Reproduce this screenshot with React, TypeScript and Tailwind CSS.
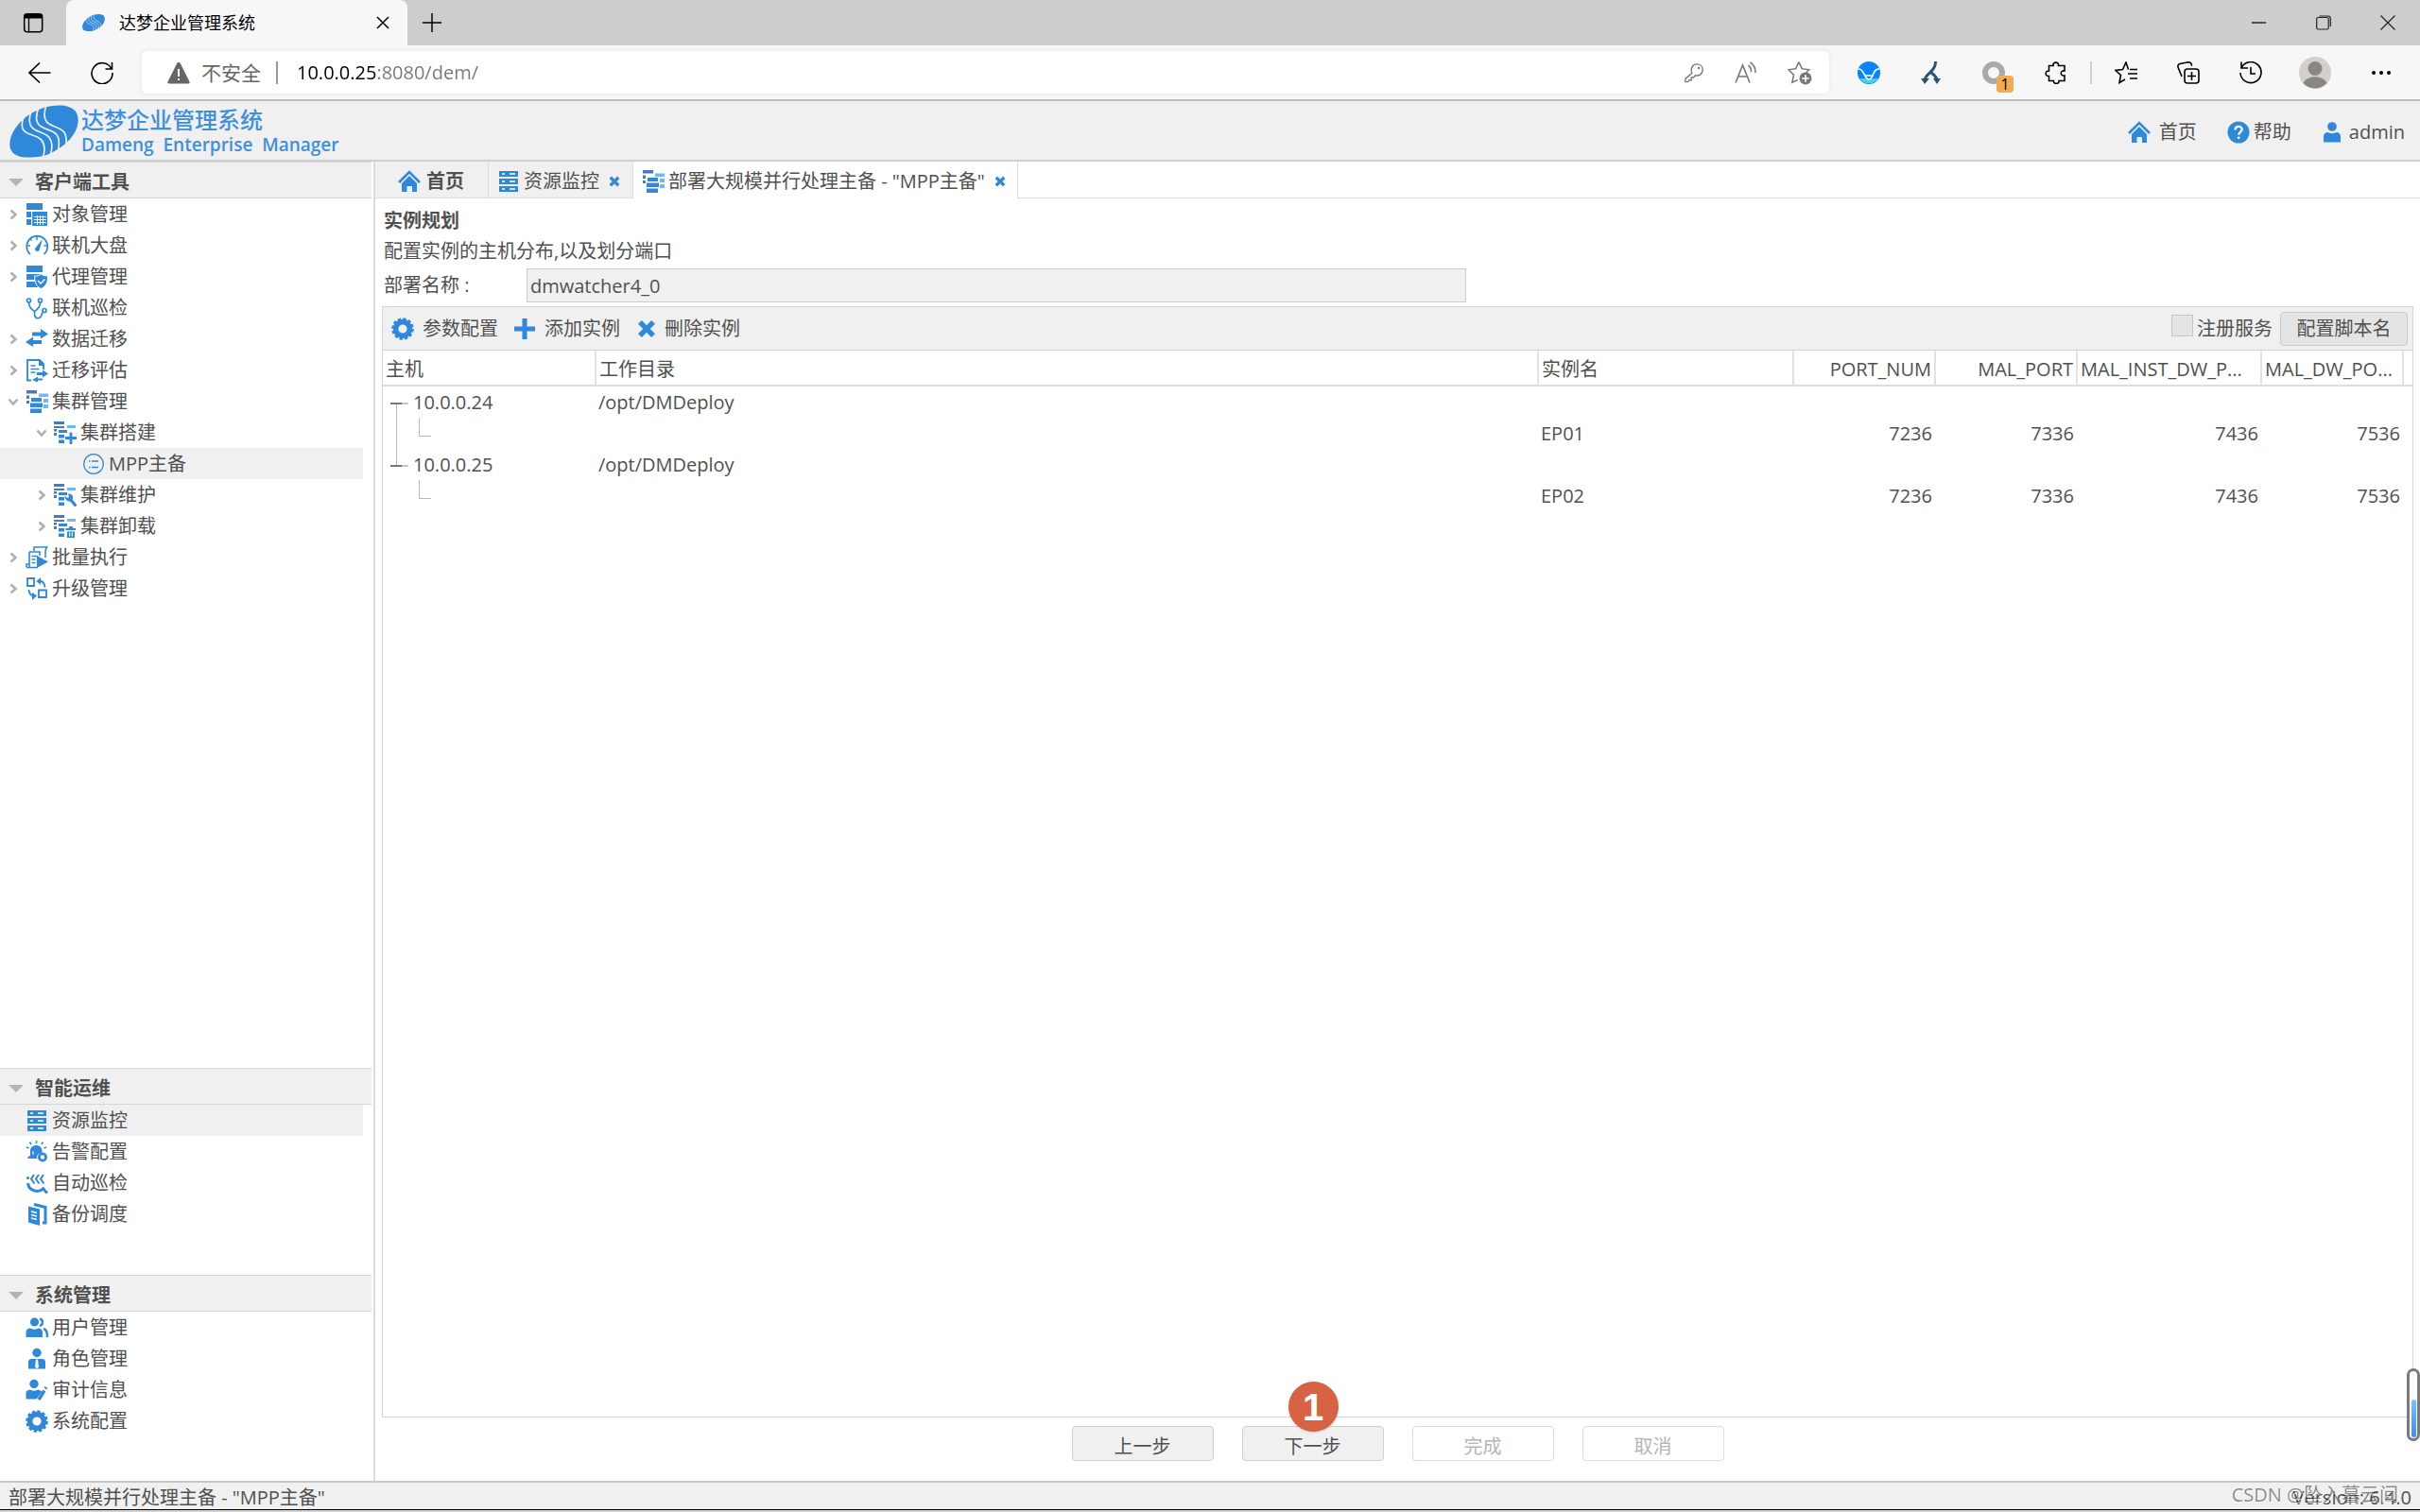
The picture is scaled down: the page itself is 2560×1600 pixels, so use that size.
import type { ReactNode } from "react";
import { clsx } from "clsx";

const BLUE = "#2f88d9";
const DARK = "#4a78b8";
const LIGHT = "#6db7fb";

type IconProps = { className?: string };

function Svg({ children, className = "size-6", box = "0 0 24 24" }: { children: ReactNode; className?: string; box?: string }) {
  return (
    <svg viewBox={box} className={clsx("shrink-0", className)} fill="none" aria-hidden="true">
      {children}
    </svg>
  );
}

/* ---------- logo ---------- */

function Logo({ className, line = "#f0f0f0" }: IconProps & { line?: string }) {
  return (
    <Svg box="30 334 220 168" className={className}>
      <path
        fill={BLUE}
        d="M31 462C30 432 48 402 78 376C112 348 152 335 192 335C228 336 249 352 249 382C248 412 232 438 205 460C178 482 150 494 132 498C108 502 84 502 66 499C44 494 32 482 31 462Z"
      />
      <g stroke={line} strokeWidth="5">
        <path d="M147 334C141 358 138 376 150 389C165 404 190 404 204 420C212 431 213 445 210 464" />
        <path d="M124 340C115 362 112 385 125 398C142 413 168 413 181 429C190 441 190 458 184 484" />
        <path d="M100 352C92 374 90 395 104 408C120 422 144 422 157 438C166 450 168 470 160 494" />
        <path d="M76 370C68 390 66 408 80 419C98 433 120 430 133 447C143 460 144 480 136 504" />
      </g>
    </Svg>
  );
}

/* ---------- application icons ---------- */

function HomeIcon({ className }: IconProps) {
  return (
    <Svg className={className}>
      <path fill={BLUE} d="M4 14l8-8 8 8v9h-5v-6H9.500v6H4z" />
      <path stroke={BLUE} strokeWidth="2.600" d="M1 13L12 2l11 11" />
      <path stroke="#f0f0f0" strokeWidth="0.800" d="M2.500 14.500L12 5l9.500 9.500" />
    </Svg>
  );
}

function HelpIcon({ className }: IconProps) {
  return (
    <Svg className={className}>
      <circle cx="12" cy="12" r="11.500" fill={BLUE} />
      <path stroke="#fff" strokeWidth="2.200" d="M8.500 9.500c0-5 7.200-4.600 7.200-.6 0 2.600-3.500 2.800-3.500 5.800" />
      <circle cx="12.200" cy="17.800" r="1.400" fill="#fff" />
    </Svg>
  );
}

function UserIcon({ className }: IconProps) {
  return (
    <Svg className={className}>
      <circle cx="12" cy="6" r="4.800" fill={BLUE} />
      <path fill={BLUE} d="M3 22.500v-6c0-3 2-4.500 4-4.500 3 1.500 7 1.500 10 0 2 0 4 1.500 4 4.500v6z" />
    </Svg>
  );
}

function ServerIcon({ className }: IconProps) {
  return (
    <Svg className={className}>
      <path fill={BLUE} d="M2 1h20v6H2zM2 9h20v6H2zM2 17h20v6H2z" />
      <path stroke="#fff" strokeWidth="1.600" d="M5 4h3M13 4h6M5 12h3M13 12h6M5 20h3M13 20h6" />
    </Svg>
  );
}

function ObjectIcon() {
  return (
    <Svg>
      <path fill={BLUE} d="M1 0h17v7H1zM1 9h5v6H1zM1 17h5v6H1z" />
      <path fill={BLUE} d="M7 9h16v15H7z" />
      <path stroke="#fff" strokeWidth="1" d="M9 14.500h13M9 17.500h13M9 20.500h13M12.500 13v10M15.500 13v10M18.500 13v10" />
      <path fill="#fff" d="M6.200 8.200h1V24h-1z" />
    </Svg>
  );
}

function GaugeIcon() {
  return (
    <Svg>
      <path stroke={BLUE} strokeWidth="1.800" d="M5 21A11 11 0 1 1 19.500 21" />
      <path stroke={BLUE} strokeWidth="1.500" d="M12 2v4M2 12h3M19.500 12h3M5 5l1.500 1.500" />
      <path fill={BLUE} d="M18 5l-3.500 12c-1 2-5 1-4.500-2z" />
    </Svg>
  );
}

function AgentIcon() {
  return (
    <Svg>
      <path fill={BLUE} d="M1 0h17v7H1zM1 9h17v6H1zM1 17h17v6H1z" />
      <path fill={BLUE} stroke="#fff" strokeWidth="1" d="M16.500 9c2 1.500 4 2 7 2 .3 6-1.500 11-7 13.500C11 22 9.500 17 9.700 11c3 0 4.800-.5 6.800-2z" />
      <path stroke="#fff" strokeWidth="1.500" d="M13 16l3 3 4.500-4.500" />
    </Svg>
  );
}

function StethoscopeIcon() {
  return (
    <Svg>
      <g stroke={BLUE} strokeWidth="1.700">
        <circle cx="3.500" cy="4" r="2" />
        <circle cx="15.500" cy="4" r="2" />
        <circle cx="20" cy="14.500" r="2" />
        <path d="M3.500 6c0 4 2 7 6 9.500 4-2.500 6-5.500 6-9.500M9.500 15v4c1 5 6 5 7.500 0l1.500-3" />
      </g>
    </Svg>
  );
}

function TransferIcon() {
  return (
    <Svg>
      <path fill={BLUE} d="M7 4.500h9V1l8 5.500-8 5V8.500H7zM17 13H8V9.500L0 15l8 5v-3h9z" />
    </Svg>
  );
}

function AssessIcon() {
  return (
    <Svg>
      <path stroke={BLUE} strokeWidth="1.800" d="M6 22.500H2V1h13l4 4.500V11" />
      <path fill={BLUE} d="M14 1h2l4 4v2h-6z" />
      <path stroke={BLUE} strokeWidth="1.600" d="M5.500 7h5M5.500 10.500h9M5.500 14h5" />
      <path fill={BLUE} d="M12 14h6v-2.500l6 4-6 4V17h-6zM18 20.500h-5V18.500l-6 3.500 6 2.500v-2h5z" />
    </Svg>
  );
}

function ClusterIcon({ className }: IconProps) {
  return (
    <Svg className={className}>
      <path fill={DARK} d="M1 0h11v3.500H1zM1 5.500h3V9H1zM1 11h3v3H1z" />
      <path fill={LIGHT} d="M14 3.500h10V7H14zM19 9h5v4h-5zM19 15h5v4h-5z" />
      <path fill={BLUE} d="M6 8h11v4H6zM5 13.500h13V18H5zM5 19.500h12V24H5z" />
    </Svg>
  );
}

function SubClusterBack() {
  return (
    <>
      <path fill={DARK} d="M0 0h11v3H0zM0 5h11v2H0zM0 8h3v2.500H0zM0 12h3v3H0z" />
      <path fill={LIGHT} d="M14 4h9v3h-9z" />
      <path fill={BLUE} d="M5 9h9v3H5zM5 14h6v3.500H5zM5 19.500h6V23H5z" />
    </>
  );
}

function ClusterAddIcon() {
  return (
    <Svg>
      <SubClusterBack />
      <path stroke={BLUE} strokeWidth="2.800" d="M18 11.500V24M12 17.500h12" />
    </Svg>
  );
}

function ClusterFixIcon() {
  return (
    <Svg>
      <SubClusterBack />
      <path stroke={BLUE} strokeWidth="3.200" d="M16 15l7.500 8.500" />
      <path fill={BLUE} d="M11.500 12.500l3 2.500 1.500-1-1-3.500c4-.5 6.500 3 4.500 6.500-2.500 3.500-8 1-8-4.500z" />
    </Svg>
  );
}

function ClusterRemoveIcon() {
  return (
    <Svg>
      <SubClusterBack />
      <path fill={BLUE} d="M12.500 14h3l1-2h3l1 2h2.500v2h-10.500zM14 17.500h8V24h-8z" />
      <path stroke="#fff" strokeWidth="1.200" d="M16.700 18.500v4M19.400 18.500v4" />
    </Svg>
  );
}

function MppIcon() {
  return (
    <Svg>
      <circle cx="12" cy="12" r="10.300" stroke={BLUE} strokeWidth="1.200" />
      <path stroke={BLUE} strokeWidth="1.300" d="M7 9h1.500M10 9h7M7 15.500h1.500M10 15.500h7" />
    </Svg>
  );
}

function BatchIcon() {
  return (
    <Svg>
      <path stroke={BLUE} strokeWidth="1.600" d="M9 5V1h13.500c-1 1.500-1.500 3-1.500 5v6M4 6h11v4M4 6v16M1 22.500h12M1 22v-3h3" />
      <path stroke={BLUE} strokeWidth="1.400" d="M6.500 10.500h6M6.500 14h4M6.500 17.500h4" />
      <path fill={BLUE} d="M12 10l12 6.500L12 23z" />
    </Svg>
  );
}

function UpgradeIcon() {
  return (
    <Svg>
      <path stroke={BLUE} strokeWidth="1.800" d="M2 1h7v8H2zM14 13.500h8V21h-8zM14 3.500c4 0 6 2 6.500 7M3.500 13c0 4 2.500 6.500 7 6.500" />
      <path fill={BLUE} d="M11.500 4l4.500-4v8zM12 19.500L7 16v8z" />
    </Svg>
  );
}

function AlarmIcon() {
  return (
    <Svg>
      <path fill={BLUE} d="M5 16V11c0-8 12.500-8 12.500 0v2c-4 0-6 3-5.500 6H2.500v-2z" />
      <path stroke={BLUE} strokeWidth="1.500" d="M11.500 0v3M4.500 1.500l1.500 2.500M18.500 1.500L17 4M1 7l2.500 1M22 7l-2.500 1" />
      <circle cx="18" cy="17.500" r="3.600" stroke={BLUE} strokeWidth="2.800" />
      <path stroke="#fff" strokeWidth="1" d="M8 15v-4" />
    </Svg>
  );
}

function InspectIcon() {
  return (
    <Svg>
      <path stroke={BLUE} strokeWidth="2" d="M9 3L6 7.500l3.500 5M14 3l-3 4.500 3.500 5M19 3l-3 4.500 3.500 5" />
      <path stroke={BLUE} strokeWidth="3" d="M2.500 12c1 8.500 12 11.500 17 4.500M18 17.500l5 5" />
      <circle cx="2.500" cy="6.500" r="1.600" fill={BLUE} />
    </Svg>
  );
}

function BackupIcon() {
  return (
    <Svg>
      <path fill={BLUE} d="M3 3.500l12 3V24L3 20.500z" />
      <path stroke={BLUE} strokeWidth="3" d="M9 1.500l12 3V21h-3" />
      <path stroke="#fff" strokeWidth="1.300" d="M6 9l6 1.500M6 12.500l6 1.500M6 16l6 1.500" />
    </Svg>
  );
}

function UsersIcon() {
  return (
    <Svg>
      <circle cx="9.500" cy="6" r="4.500" fill={BLUE} />
      <path fill={BLUE} d="M.5 22v-5c0-3 2-4 4-4.500 3 1.500 7 1.500 10 0 2 .5 3.500 2 3.500 4.500v5z" />
      <path stroke={BLUE} strokeWidth="2.400" d="M15 2.500c4 1 4 6.500 0 7.500M19 13c3 .5 4 3 4 9" />
    </Svg>
  );
}

function RoleIcon() {
  return (
    <Svg>
      <circle cx="12" cy="5.500" r="4.700" fill={BLUE} />
      <path fill={BLUE} d="M3 22.500v-7c0-3 2-3.500 4-3.500h10c2 0 4 .5 4 3.500v7z" />
      <path fill="#fff" d="M11 12.500h2l1 8-2 2-2-2z" />
    </Svg>
  );
}

function AuditIcon() {
  return (
    <Svg>
      <circle cx="9" cy="5.500" r="4.700" fill={BLUE} />
      <path fill={BLUE} d="M.5 21.500v-6c0-3 2-3.500 4-4 3 1.500 6 1.500 9 0l4 2-6 8z" />
      <path stroke={BLUE} strokeWidth="3.400" d="M14 22l6-9.500M21 10.500l1-1.500" />
    </Svg>
  );
}

function GearIcon({ className }: IconProps) {
  return (
    <Svg className={className}>
      <circle cx="12" cy="12" r="10.300" stroke={BLUE} strokeWidth="3" strokeDasharray="3.240 2.150" />
      <circle cx="12" cy="12" r="7.400" stroke={BLUE} strokeWidth="5.600" />
    </Svg>
  );
}

function PlusIcon() {
  return (
    <Svg>
      <path stroke={BLUE} strokeWidth="5" d="M12 1v22M1 12h22" />
    </Svg>
  );
}

function CrossIcon({ className }: IconProps) {
  return (
    <Svg className={className}>
      <path stroke={BLUE} strokeWidth="6.500" d="M3.500 3.500l17 17M20.500 3.500l-17 17" />
    </Svg>
  );
}

/* ---------- browser chrome ---------- */

function ToolbarButton({ label, children, className }: { label: string; children: ReactNode; className?: string }) {
  return (
    <button type="button" aria-label={label} className={clsx("flex shrink-0 items-center justify-center", className)}>
      {children}
    </button>
  );
}

function TabStrip() {
  return (
    <div className="flex h-12 shrink-0 bg-[#cdcdcd] text-black">
      <ToolbarButton label="标签页操作菜单" className="w-[70px]">
        <Svg className="size-6">
          <rect x="2.700" y="2.700" width="19" height="19" rx="3" stroke="#000" strokeWidth="1.500" />
          <path fill="#000" d="M2.500 3h19v4.500h-19z" />
          <path stroke="#000" strokeWidth="1.300" d="M7.500 7v14" />
        </Svg>
      </ToolbarButton>
      <div className="flex w-[361px] items-center rounded-t-lg bg-[#f7f7f7] pl-[17px]">
        <Logo className="h-5 w-6" line="#f7f7f7" />
        <span className="ml-[15px] flex-1 text-[18px] leading-6">达梦企业管理系统</span>
        <ToolbarButton label="关闭标签页" className="mr-3 size-7">
          <Svg className="size-4" box="0 0 16 16">
            <path stroke="#000" strokeWidth="1.500" d="M2 2l12 12M14 2L2 14" />
          </Svg>
        </ToolbarButton>
      </div>
      <ToolbarButton label="新建标签页" className="w-[52px]">
        <Svg className="size-[22px]">
          <path stroke="#000" strokeWidth="1.600" d="M12 1v22M1 12h22" />
        </Svg>
      </ToolbarButton>
      <div className="flex-1" />
      <ToolbarButton label="最小化" className="w-[68px]">
        <Svg className="size-4" box="0 0 16 16">
          <path stroke="#000" strokeWidth="1.200" d="M0 8h15" />
        </Svg>
      </ToolbarButton>
      <ToolbarButton label="还原" className="w-[68px]">
        <Svg className="size-4" box="0 0 16 16">
          <rect x="0.700" y="2.500" width="12.500" height="12.500" rx="1.500" stroke="#222" strokeWidth="1.200" />
          <path stroke="#222" strokeWidth="1.200" d="M3.500 1h9c1.500 0 2.800 1 2.800 2.800V12" />
        </Svg>
      </ToolbarButton>
      <ToolbarButton label="关闭" className="w-[68px]">
        <Svg className="size-4" box="0 0 16 16">
          <path stroke="#222" strokeWidth="1.200" d="M.5 .5l15 15M15.500 .5l-15 15" />
        </Svg>
      </ToolbarButton>
    </div>
  );
}

function AddressBar() {
  return (
    <div className="flex h-[59px] shrink-0 items-center border-b-2 border-[#bfbfbf] bg-[#f7f7f7]">
      <ToolbarButton label="后退" className="ml-5 w-11">
        <Svg className="size-6">
          <path stroke="#000" strokeWidth="1.600" d="M23.500 12H1M12 1.500L1 12l11 10.500" />
        </Svg>
      </ToolbarButton>
      <ToolbarButton label="刷新" className="ml-[22px] w-11">
        <Svg className="size-6">
          <path stroke="#000" strokeWidth="1.600" d="M22 8A11 11 0 1 0 23 12M22.500 1v7h-7" />
        </Svg>
      </ToolbarButton>
      <div className="ml-5 flex h-[45px] flex-1 items-center rounded-md bg-white pr-[18px] pl-[27px] shadow-[0_0_6px_rgba(0,0,0,0.08)]">
        <Svg>
          <path fill="#666" d="M12 1c1 0 1.500.5 2 1.500l9.500 19c.5 1-.2 2-1.500 2H2c-1.300 0-2-1-1.500-2l9.500-19C10.500 1.500 11 1 12 1z" />
          <path stroke="#fff" strokeWidth="2" d="M12 8v8M12 18v2" />
        </Svg>
        <span className="ml-3 text-[21px] text-[#666]">不安全</span>
        <span className="mr-5 ml-4 h-6 w-0.5 bg-[#999]" />
        {/* host in black, the rest of the address in grey */}
        <input
          aria-label="地址栏"
          readOnly
          value="10.0.0.25:8080/dem/"
          className="w-0 flex-1 bg-linear-to-r from-black from-[84px] to-[#777] to-[84px] bg-clip-text text-[20px] text-transparent outline-none"
        />
        <div className="flex items-center gap-8 text-[#777]">
          <ToolbarButton label="密码">
            <Svg className="size-[22px]">
              <path stroke="currentColor" strokeWidth="1.500" d="M9.500 12.500C7.500 6 11 2 15.500 2c4 0 6.500 3 6.500 6.500 0 5-4 7.500-8.500 6.500l-2 2.500H9v3H6.500L5 22.500H2v-3.500z" />
              <circle cx="17.500" cy="6.500" r="1.300" fill="currentColor" />
            </Svg>
          </ToolbarButton>
          <ToolbarButton label="大声朗读">
            <Svg>
              <path stroke="currentColor" strokeWidth="1.600" d="M1 22.500L8.500 4 16 22.500M4 16h9M14.500 4c2 1.500 3 3.500 3 7M16.500 1c4 2.500 5.500 6 5.500 11" />
            </Svg>
          </ToolbarButton>
          <ToolbarButton label="添加到收藏夹">
            <Svg className="size-[26px]">
              <path stroke="currentColor" strokeWidth="1.400" d="M11 1.500l3 6.500 7 1-3 3M11 1.500L8 8 1 9l5 5-1.500 7.500L10 19" />
              <circle cx="17.500" cy="17.500" r="6" fill="currentColor" />
              <path stroke="#fff" strokeWidth="1.500" d="M17.500 14v7M14 17.500h7" />
            </Svg>
          </ToolbarButton>
        </div>
      </div>
      <div className="flex shrink-0 items-center pr-[6px] pl-[9px]">
        <ToolbarButton label="扩展一" className="w-[66px]">
          <Svg>
            <circle cx="12" cy="12" r="12" fill="#0a84fd" />
            <path fill="#45d3e4" d="M2 18h20A12 12 0 0 1 2 18z" />
            <path stroke="#fff" strokeWidth="1.600" d="M1 8c6-1 6 11 11 11S16 7 23 8M7 15h10" />
          </Svg>
        </ToolbarButton>
        <ToolbarButton label="扩展二" className="w-[66px]">
          <Svg>
            <path stroke="#2b5270" strokeWidth="3" d="M16.500 0c0 8-4 9-6 12-2 2-5 4-5 7M12 12c3 2 5 4 6 7" />
            <path fill="#2b5270" d="M1 18h9l-5 6zM14 18h8l-4 6z" />
          </Svg>
        </ToolbarButton>
        <ToolbarButton label="扩展三" className="relative w-[66px]">
          <Svg>
            <circle cx="12" cy="12" r="9" stroke="#a9a9a9" strokeWidth="6" />
          </Svg>
          <span className="absolute top-[15px] right-3 flex h-[18px] w-[18px] items-center justify-center rounded-sm bg-[#f0ad4e] text-[16px] text-black">
            1
          </span>
        </ToolbarButton>
        <ToolbarButton label="扩展" className="w-[66px]">
          <Svg>
            <path
              stroke="#000"
              strokeWidth="1.600"
              d="M4.500 4.500H9c-1-4.500 6.500-4.500 5.500 0H21v5.500c-5-1-5 6 0 5v5.500h-6c1 3.800-6.500 3.800-5.500 0h-5V15.500c-4.500.5-4.500-6 0-5.500z"
            />
          </Svg>
        </ToolbarButton>
        <span className="mx-[3px] h-6 w-0.5 bg-[#cfcfcf]" />
        <ToolbarButton label="收藏夹" className="w-[66px]">
          <Svg>
            <path stroke="#000" strokeWidth="1.600" d="M14.500 8.500L12 1 8.500 8.500 1 9.500l5.500 5L5 22.500l6-3.500M16 8.500h8M14 13h10M16 18h8" />
          </Svg>
        </ToolbarButton>
        <ToolbarButton label="集锦" className="w-[66px]">
          <Svg>
            <rect x="8" y="8" width="15" height="15" rx="3" stroke="#000" strokeWidth="1.600" />
            <path stroke="#000" strokeWidth="1.600" d="M15.500 11v9M11 15.500h9M5 16L1 6c-.5-2 .5-3 2-3.500L12 .8c2 0 3.500 1.200 3.500 4" />
          </Svg>
        </ToolbarButton>
        <ToolbarButton label="历史记录" className="w-[66px]">
          <Svg>
            <path stroke="#000" strokeWidth="1.600" d="M2 7a11 11 0 1 1-1 5M2 .5V7h7M12 6v7h5" />
          </Svg>
        </ToolbarButton>
        <ToolbarButton label="个人资料" className="w-[70px]">
          <Svg className="size-[34px]" box="0 0 34 34">
            <circle cx="17" cy="17" r="17" fill="#d2d0cd" />
            <circle cx="17" cy="12.500" r="7.500" fill="#8a8683" />
            <path fill="#8a8683" d="M4.500 28c4-9 21-9 25 0a17 17 0 0 1-25 0z" />
          </Svg>
        </ToolbarButton>
        <ToolbarButton label="设置及其他" className="w-[70px]">
          <Svg className="h-6 w-[22px]" box="0 0 22 24">
            <circle cx="3" cy="12" r="2" fill="#000" />
            <circle cx="11" cy="12" r="2" fill="#000" />
            <circle cx="19" cy="12" r="2" fill="#000" />
          </Svg>
        </ToolbarButton>
      </div>
    </div>
  );
}

/* ---------- application ---------- */

function AppHeader() {
  return (
    <header className="flex h-16 shrink-0 items-center border-b-2 border-[#d0d0d0] bg-[#f0f0f0] pt-[2px]">
      <Logo className="ml-[10px] h-14 w-[73px]" />
      <div className="ml-[3px] flex flex-col text-[#3f8fdc]">
        <span className="text-[24px] leading-7 font-medium">达梦企业管理系统</span>
        <span className="text-[19px] leading-6 font-semibold whitespace-pre">Dameng  Enterprise  Manager</span>
      </div>
      <nav className="mt-[2px] mr-4 ml-auto flex items-center">
        <a href="#home" className="flex items-center gap-[9px]">
          <HomeIcon />
          首页
        </a>
        <a href="#help" className="ml-8 flex items-center gap-1">
          <HelpIcon />
          帮助
        </a>
        <a href="#admin" className="ml-[31px] flex items-center gap-[6px]">
          <UserIcon />
          admin
        </a>
      </nav>
    </header>
  );
}

type TreeItem = {
  label: string;
  icon: ReactNode;
  level?: number;
  state?: "open" | "closed";
  selected?: boolean;
};

const clientTools: TreeItem[] = [
  { label: "对象管理", icon: <ObjectIcon />, state: "closed" },
  { label: "联机大盘", icon: <GaugeIcon />, state: "closed" },
  { label: "代理管理", icon: <AgentIcon />, state: "closed" },
  { label: "联机巡检", icon: <StethoscopeIcon /> },
  { label: "数据迁移", icon: <TransferIcon />, state: "closed" },
  { label: "迁移评估", icon: <AssessIcon />, state: "closed" },
  { label: "集群管理", icon: <ClusterIcon />, state: "open" },
  { label: "集群搭建", icon: <ClusterAddIcon />, level: 1, state: "open" },
  { label: "MPP主备", icon: <MppIcon />, level: 2, selected: true },
  { label: "集群维护", icon: <ClusterFixIcon />, level: 1, state: "closed" },
  { label: "集群卸载", icon: <ClusterRemoveIcon />, level: 1, state: "closed" },
  { label: "批量执行", icon: <BatchIcon />, state: "closed" },
  { label: "升级管理", icon: <UpgradeIcon />, state: "closed" },
];

const smartOps: TreeItem[] = [
  { label: "资源监控", icon: <ServerIcon />, selected: true },
  { label: "告警配置", icon: <AlarmIcon /> },
  { label: "自动巡检", icon: <InspectIcon /> },
  { label: "备份调度", icon: <BackupIcon /> },
];

const systemAdmin: TreeItem[] = [
  { label: "用户管理", icon: <UsersIcon /> },
  { label: "角色管理", icon: <RoleIcon /> },
  { label: "审计信息", icon: <AuditIcon /> },
  { label: "系统配置", icon: <GearIcon /> },
];

const indents = ["pl-2", "pl-[38px]", "pl-[68px]"];

function TreeSection({ title, items, className }: { title: string; items: TreeItem[]; className?: string }) {
  return (
    <section className={className}>
      <h2 className="mr-0.5 flex h-[39px] items-center border-y border-[#d6d6d6] bg-[#f0f0f0] pt-1 pl-[9px] font-bold">
        <Svg className="h-2 w-4" box="0 0 16 8">
          <path fill="#b4b4b4" d="M0 0h16L8 8z" />
        </Svg>
        <span className="ml-3">{title}</span>
      </h2>
      <ul className="mr-[11px]">
        {items.map((item) => (
          <li key={item.label} className={clsx("flex h-[33px] items-center", indents[item.level ?? 0], item.selected && "bg-[#f0f0f0]")}>
            <span className="flex w-[19px] shrink-0">
              {item.state && (
                <Svg className={clsx("size-3", item.state === "open" && "rotate-90")} box="0 0 12 12">
                  <path stroke="#b0b0b0" strokeWidth="2.600" d="M3.500 1.500L8.500 6l-5 4.500" />
                </Svg>
              )}
            </span>
            {item.icon}
            <a href="#tree" className="ml-1">
              {item.label}
            </a>
          </li>
        ))}
      </ul>
    </section>
  );
}

function Sidebar() {
  return (
    <aside className="flex w-[397px] shrink-0 flex-col border-r-2 border-[#dcdcdc]">
      <TreeSection title="客户端工具" items={clientTools} className="flex-1" />
      <TreeSection title="智能运维" items={smartOps} className="h-[219px] shrink-0" />
      <TreeSection title="系统管理" items={systemAdmin} className="h-[218px] shrink-0" />
    </aside>
  );
}

function PageTabs() {
  return (
    <div className="flex h-[39px] shrink-0 items-stretch border-b border-[#dcdcdc]">
      <button type="button" className="flex w-[120px] items-center gap-[6px] border-r border-[#dcdcdc] bg-[#f0f0f0] pt-[3px] pl-6 font-bold">
        <HomeIcon />
        首页
      </button>
      <div className="flex w-[153px] items-center border-r border-[#dcdcdc] bg-[#f0f0f0] pt-[3px] pl-[9px]">
        <ServerIcon />
        <button type="button" className="ml-1">资源监控</button>
        <button type="button" aria-label="关闭资源监控" className="ml-[10px]">
          <CrossIcon className="size-3" />
        </button>
      </div>
      <div className="-mb-px flex items-center border-r border-[#dcdcdc] bg-white pt-[3px] pr-3 pl-[9px]">
        <ClusterIcon />
        <button type="button" className="ml-1">部署大规模并行处理主备 - "MPP主备"</button>
        <button type="button" aria-label="关闭部署" className="ml-[10px]">
          <CrossIcon className="size-3" />
        </button>
      </div>
    </div>
  );
}

const columns = [
  { title: "主机", width: "w-[225px]" },
  { title: "工作目录" },
  { title: "实例名", width: "w-[270px]" },
  { title: "PORT_NUM", width: "w-[150px]", right: true },
  { title: "MAL_PORT", width: "w-[150px]", right: true },
  { title: "MAL_INST_DW_P...", width: "w-[195px]" },
  { title: "MAL_DW_PO...", width: "w-[150px]" },
];

const hosts = [
  { ip: "10.0.0.24", dir: "/opt/DMDeploy", instance: "EP01", ports: [7236, 7336, 7436, 7536] },
  { ip: "10.0.0.25", dir: "/opt/DMDeploy", instance: "EP02", ports: [7236, 7336, 7436, 7536] },
];

function HostBranch({ last }: { last: boolean }) {
  return (
    <Svg className="h-[33px] w-7" box="0 0 28 33">
      <path stroke="#b8b8b8" strokeWidth="1" d={last ? "M14.500 0V17" : "M14.500 19V33"} />
      <path stroke="#c8c8c8" strokeWidth="2" d="M20 18h7" />
      <path stroke="#777" strokeWidth="2" d="M8 18h12" />
    </Svg>
  );
}

function LeafBranch({ line }: { line: boolean }) {
  return (
    <Svg className="h-[33px] w-14" box="0 0 56 33">
      {line && <path stroke="#b8b8b8" strokeWidth="1" d="M14.500 0v33" />}
      <path stroke="#b8b8b8" strokeWidth="1" d="M38.500 0v19.500H51" />
    </Svg>
  );
}

function InstanceTable() {
  return (
    <table className="w-full table-fixed border-collapse text-left">
      <thead>
        <tr className="h-[37px] border-b-2 border-[#dedede]">
          {columns.map((col) => (
            <th
              key={col.title}
              scope="col"
              className={clsx("border-r-2 border-[#e2e2e2] px-[3px] pt-1 font-normal whitespace-nowrap", col.width, col.right && "text-right")}
            >
              {col.title}
            </th>
          ))}
          <th aria-label="空列" className="w-[10px]" />
        </tr>
      </thead>
      {hosts.map((host, i) => (
        <tbody key={host.ip}>
          <tr className="h-[33px]">
            <td className="p-0">
              <div className="flex h-[33px] items-center">
                <HostBranch last={i === hosts.length - 1} />
                <span className="ml-1">{host.ip}</span>
              </div>
            </td>
            <td className="px-[3px] py-0">{host.dir}</td>
            <td colSpan={6} />
          </tr>
          <tr className="h-[33px]">
            <td className="p-0">
              <LeafBranch line={i < hosts.length - 1} />
            </td>
            <td />
            <td className="px-[3px] py-0">{host.instance}</td>
            {host.ports.map((port) => (
              <td key={port} className="px-[3px] py-0 text-right">
                {port}
              </td>
            ))}
            <td />
          </tr>
        </tbody>
      ))}
    </table>
  );
}

function InstancePanel() {
  return (
    <div className="mr-[7px] ml-[7px] flex flex-1 flex-col border border-[#d4d4d4]">
      <div className="flex h-[46px] shrink-0 items-center border-b border-[#d4d4d4] bg-[#f0f0f0] pr-[5px] pl-[9px]">
        <button type="button" className="flex items-center gap-[9px]">
          <GearIcon />
          参数配置
        </button>
        <button type="button" className="ml-4 flex items-center gap-[9px]">
          <PlusIcon />
          添加实例
        </button>
        <button type="button" className="ml-[18px] flex items-center gap-[9px]">
          <CrossIcon className="size-5" />
          刪除实例
        </button>
        <label className="ml-auto flex items-center gap-1">
          <input type="checkbox" className="mb-[6px] size-[23px] appearance-none border border-[#c6c6c6] bg-[#e4e4e4]" />
          注册服务
        </label>
        <button type="button" className="ml-2 h-9 w-[135px] rounded border border-[#c9c9c9] bg-[#e4e4e4]">
          配置脚本名
        </button>
      </div>
      <InstanceTable />
    </div>
  );
}

function WizardButton({ children, disabled = false }: { children: ReactNode; disabled?: boolean }) {
  return (
    <button
      type="button"
      disabled={disabled}
      className={clsx(
        "relative h-[37px] w-[150px] rounded border pt-[6px]",
        disabled ? "border-[#dcdcdc] bg-white text-[#b5b5b5]" : "border-[#cfcfcf] bg-[#f0f0f0]",
      )}
    >
      {children}
    </button>
  );
}

function DeployPage() {
  return (
    <main className="relative flex min-w-0 flex-1 flex-col">
      <PageTabs />
      <div className="flex h-[114px] shrink-0 flex-col pl-[9px]">
        <h1 className="mt-2 leading-8 font-bold">实例规划</h1>
        <p className="leading-8">配置实例的主机分布,以及划分端口</p>
        <div className="mt-0.5 flex items-center">
          <label htmlFor="deploy-name" className="w-[151px]">部署名称 :</label>
          <input
            id="deploy-name"
            readOnly
            value="dmwatcher4_0"
            className="h-9 w-[994px] border border-[#cccccc] bg-[#f0f0f0] px-[3px] outline-none"
          />
        </div>
      </div>
      <InstancePanel />
      <div className="flex h-[67px] shrink-0 justify-center gap-[30px] pt-[9px]">
        <WizardButton>上一步</WizardButton>
        <WizardButton>
          下一步
          <span className="absolute -top-12 left-12 flex size-[53px] items-center justify-center rounded-full bg-[#d86344] font-['Liberation_Sans',sans-serif] text-[40px] leading-none font-bold text-white shadow-sm">
            1
          </span>
        </WizardButton>
        <WizardButton disabled>完成</WizardButton>
        <WizardButton disabled>取消</WizardButton>
      </div>
      <div className="absolute right-0 bottom-[42px] flex h-[77px] w-[14px] items-end justify-center rounded-full border-3 border-[#7b7b7b] bg-white/80 pb-px">
        <span className="h-10 w-[5px] rounded-full bg-linear-to-b from-[#74c4fb] to-[#3f8cf8]" />
      </div>
    </main>
  );
}

function StatusBar() {
  return (
    <footer className="relative flex h-[33px] shrink-0 items-center justify-between border-t-2 border-[#c8c8c8] bg-[#f0f0f0] pr-[9px] pl-[9px] shadow-[inset_0_-2px_0_#d4d4d4,inset_0_-3px_0_#000]">
      <span>部署大规模并行处理主备 - "MPP主备"</span>
      <span>Version: 6.4.0</span>
      <span className="absolute right-[23px] bottom-[6px] text-[20px] leading-6 text-black/45 [text-shadow:1px_1px_0_rgba(255,255,255,0.6)]">
        CSDN @坠入暮云间
      </span>
    </footer>
  );
}

export default function App() {
  return (
    <div
      lang="zh-CN"
      className="flex h-screen min-h-[1000px] flex-col overflow-hidden bg-white font-['Open_Sans','Noto_Sans_CJK_SC',sans-serif] text-[20px] leading-7 text-[#505050]"
    >
      <TabStrip />
      <AddressBar />
      <AppHeader />
      <div className="flex min-h-0 flex-1">
        <Sidebar />
        <DeployPage />
      </div>
      <StatusBar />
    </div>
  );
}
